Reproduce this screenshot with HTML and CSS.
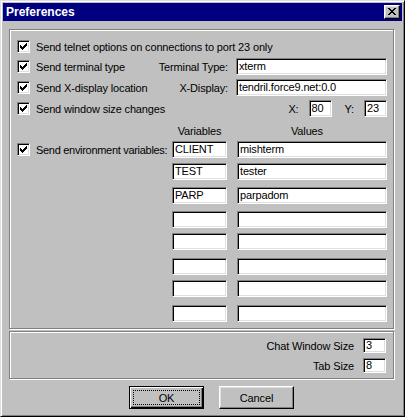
FILE: index.html
```html
<!DOCTYPE html>
<html>
<head>
<meta charset="utf-8">
<title>Preferences</title>
<link rel="stylesheet" href="styles.css">
</head>
<body>
<div class="window">
  <div class="titlebar">
    <span class="title">Preferences</span>
    <span class="close"><svg width="8" height="7" viewBox="0 0 8 7" shape-rendering="crispEdges"><path d="M0 0h2v1h-2zM6 0h2v1h-2zM1 1h2v1h-2zM5 1h2v1h-2zM2 2h4v1h-4zM3 3h2v1h-2zM2 4h4v1h-4zM1 5h2v1h-2zM5 5h2v1h-2zM0 6h2v1h-2zM6 6h2v1h-2z" fill="#000"/></svg></span>
  </div>
  <div class="body">
    <div class="group group-main">
      <div class="row r1">
        <span class="check"><span class="cb"><svg width="11" height="11" viewBox="-1 -1 11 11" shape-rendering="crispEdges"><path d="M1 3h1v1h1v1h1v-1h1v-1h1v-1h1v-1h1v3h-1v1h-1v1h-1v1h-1v1h-1v-1h-1v-1h-1z" fill="#000"/></svg></span><span>Send telnet options on connections to port 23 only</span></span>
      </div>
      <div class="row r2">
        <span class="check"><span class="cb"><svg width="11" height="11" viewBox="-1 -1 11 11" shape-rendering="crispEdges"><path d="M1 3h1v1h1v1h1v-1h1v-1h1v-1h1v-1h1v3h-1v1h-1v1h-1v1h-1v1h-1v-1h-1v-1h-1z" fill="#000"/></svg></span><span>Send terminal type</span></span>
        <span class="lbl">Terminal Type:</span>
        <span class="field w151">xterm</span>
      </div>
      <div class="row r3">
        <span class="check"><span class="cb"><svg width="11" height="11" viewBox="-1 -1 11 11" shape-rendering="crispEdges"><path d="M1 3h1v1h1v1h1v-1h1v-1h1v-1h1v-1h1v3h-1v1h-1v1h-1v1h-1v1h-1v-1h-1v-1h-1z" fill="#000"/></svg></span><span>Send X-display location</span></span>
        <span class="lbl">X-Display:</span>
        <span class="field w151">tendril.force9.net:0.0</span>
      </div>
      <div class="row r4">
        <span class="check"><span class="cb"><svg width="11" height="11" viewBox="-1 -1 11 11" shape-rendering="crispEdges"><path d="M1 3h1v1h1v1h1v-1h1v-1h1v-1h1v-1h1v3h-1v1h-1v1h-1v1h-1v1h-1v-1h-1v-1h-1z" fill="#000"/></svg></span><span>Send window size changes</span></span>
        <span class="xy-lbl">X:</span>
        <span class="field w23">80</span>
        <span class="xy-lbl y-lbl">Y:</span>
        <span class="field w23">23</span>
      </div>
      <div class="env-head">
        <span class="env-left"></span>
        <span class="head-var">Variables</span>
        <span class="head-val">Values</span>
      </div>
      <div class="env-row g2">
        <span class="env-left"><span class="check"><span class="cb"><svg width="11" height="11" viewBox="-1 -1 11 11" shape-rendering="crispEdges"><path d="M1 3h1v1h1v1h1v-1h1v-1h1v-1h1v-1h1v3h-1v1h-1v1h-1v1h-1v1h-1v-1h-1v-1h-1z" fill="#000"/></svg></span><span class="env-lbl">Send environment variables:</span></span></span>
        <span class="field w55">CLIENT</span>
        <span class="field w150">mishterm</span>
      </div>
      <div class="env-row g5">
        <span class="env-left"></span>
        <span class="field w55">TEST</span>
        <span class="field w150">tester</span>
      </div>
      <div class="env-row g7">
        <span class="env-left"></span>
        <span class="field w55">PARP</span>
        <span class="field w150">parpadom</span>
      </div>
      <div class="env-row g7">
        <span class="env-left"></span>
        <span class="field w55"></span>
        <span class="field w150"></span>
      </div>
      <div class="env-row g5">
        <span class="env-left"></span>
        <span class="field w55"></span>
        <span class="field w150"></span>
      </div>
      <div class="env-row g8">
        <span class="env-left"></span>
        <span class="field w55"></span>
        <span class="field w150"></span>
      </div>
      <div class="env-row g5">
        <span class="env-left"></span>
        <span class="field w55"></span>
        <span class="field w150"></span>
      </div>
      <div class="env-row g8">
        <span class="env-left"></span>
        <span class="field w55"></span>
        <span class="field w150"></span>
      </div>
    </div>
    <div class="group group-sizes">
      <div class="size-row">
        <span>Chat Window Size</span>
        <span class="field small">3</span>
      </div>
      <div class="size-row">
        <span>Tab Size</span>
        <span class="field small">8</span>
      </div>
    </div>
    <div class="buttons">
      <button class="btn default"><span class="focus">OK</span></button>
      <button class="btn">Cancel</button>
    </div>
  </div>
</div>
</body>
</html>
```
FILE: styles.css
```css
html, body {
  margin: 0;
  padding: 0;
  background: #c0c0c0;
}

.window {
  width: 405px;
  height: 417px;
  box-sizing: border-box;
  background: #c0c0c0;
  border: 1px solid;
  border-color: #dfdfdf #000 #000 #dfdfdf;
  box-shadow: inset 1px 1px 0 #fff, inset -1px -1px 0 #808080;
  padding: 2px;
  font-family: "Liberation Sans", Arial, sans-serif;
  font-size: 11px;
  letter-spacing: -0.15px;
  color: #000;
}

.titlebar {
  height: 18px;
  background: #000080;
  display: flex;
  justify-content: space-between;
  align-items: flex-start;
}

.title {
  color: #fff;
  font-weight: bold;
  font-size: 12px;
  letter-spacing: 0;
  line-height: 18px;
  padding-left: 3px;
}

.close {
  display: flex;
  align-items: flex-start;
  box-sizing: border-box;
  width: 16px;
  height: 14px;
  margin: 2px 2px 0 0;
  padding: 2px 0 0 3px;
  background: #c0c0c0;
  border: 1px solid;
  border-color: #fff #000 #000 #fff;
  box-shadow: inset -1px -1px 0 #808080, inset 1px 1px 0 #dfdfdf;
}

.close svg, .cb svg {
  display: block;
}

.body {
  padding: 0 6px;
}

.group {
  box-sizing: border-box;
  width: 385px;
  border: 1px solid #808080;
  box-shadow: 1px 1px 0 #fff, inset 1px 1px 0 #fff;
}

.group-main {
  margin-top: 8px;
  height: 300px;
  padding: 7px 6px 0 7px;
}

.row {
  display: flex;
  align-items: center;
}

.r1 { height: 19px; }
.r2, .r3, .r4 { height: 21px; }

.check {
  display: flex;
  align-items: center;
  gap: 6px;
  flex: 1;
  white-space: nowrap;
}

.cb {
  flex: none;
  box-sizing: border-box;
  width: 13px;
  height: 13px;
  background: #fff;
  border: 1px solid;
  border-color: #808080 #fff #fff #808080;
  box-shadow: inset 1px 1px 0 #000, inset -1px -1px 0 #dfdfdf;
}

.field {
  flex: none;
  box-sizing: border-box;
  height: 17px;
  background: #fff;
  border: 1px solid;
  border-color: #808080 #fff #fff #808080;
  box-shadow: inset 1px 1px 0 #000, inset -1px -1px 0 #dfdfdf;
  padding: 0 2px;
  line-height: 15px;
  white-space: nowrap;
  overflow: hidden;
}

.w151 { width: 151px; }
.w150 { width: 150px; }
.w55 { width: 55px; }
.w23 { width: 23px; }

.lbl {
  margin-right: 8px;
}

.xy-lbl {
  margin-right: 10px;
}

.y-lbl {
  margin-left: 13px;
}

.env-head {
  display: flex;
  align-items: center;
  height: 17px;
  margin-top: 3px;
}

.env-left {
  flex: none;
  width: 155px;
  display: flex;
  align-items: center;
}

.env-lbl {
  letter-spacing: -0.3px;
}

.head-var {
  width: 55px;
  text-align: center;
}

.head-val {
  padding-left: 64px;
}

.env-row {
  display: flex;
  align-items: center;
  height: 17px;
  gap: 10px;
}

.env-row .env-left {
  margin-right: -10px;
}

.g2 { margin-top: 2px; }
.g5 { margin-top: 5px; }
.g7 { margin-top: 7px; }
.g8 { margin-top: 8px; }

.group-sizes {
  margin-top: 2px;
  height: 48px;
  padding: 6px 7px 0 0;
  display: flex;
  flex-direction: column;
  align-items: flex-end;
  gap: 5px;
}

.size-row {
  display: flex;
  align-items: center;
  gap: 9px;
}

.field.small {
  width: 23px;
  height: 15px;
  line-height: 13px;
}

.buttons {
  display: flex;
  gap: 15px;
  margin-top: 7px;
  padding-left: 120px;
}

.btn {
  box-sizing: border-box;
  width: 75px;
  height: 23px;
  padding: 0;
  margin: 0;
  font: inherit;
  letter-spacing: inherit;
  color: #000;
  background: #c0c0c0;
  display: flex;
  align-items: center;
  justify-content: center;
  border: 1px solid;
  border-color: #fff #000 #000 #fff;
  box-shadow: inset -1px -1px 0 #808080, inset 1px 1px 0 #dfdfdf;
}

.btn.default {
  border-color: #000;
  box-shadow: inset 1px 1px 0 #fff, inset -1px -1px 0 #000, inset -2px -2px 0 #808080;
  outline: 1px dotted #000;
  outline-offset: -5px;
}
```
